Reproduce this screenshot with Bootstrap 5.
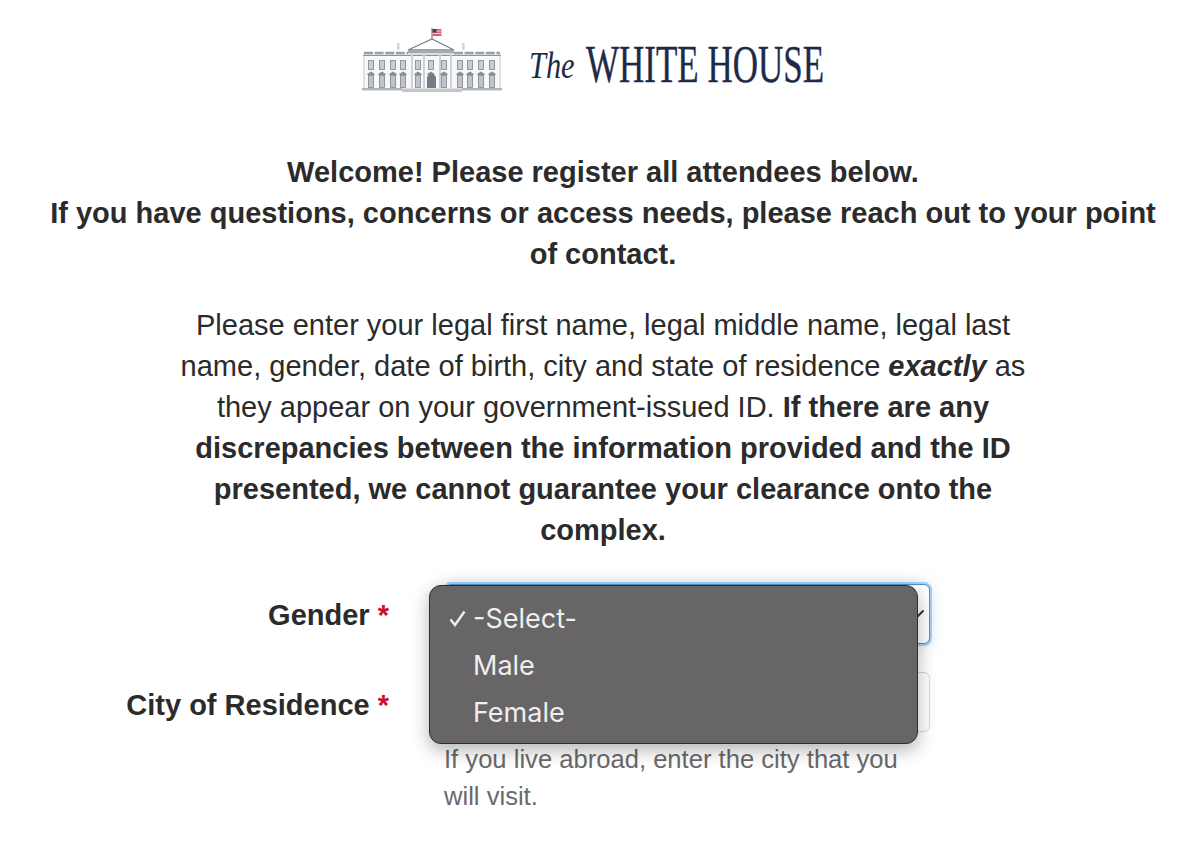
<!DOCTYPE html>
<html lang="en">
<head>
  <meta charset="UTF-8" />
  <title>Register attendees - The White House</title>
  <link href="https://cdn.jsdelivr.net/npm/bootstrap@5.3.0/dist/css/bootstrap.min.css" rel="stylesheet" />
  <style>
    body {
      background: #fff;
      color: #2b2b2b;
      font-family: "Liberation Sans", Arial, sans-serif;
      font-size: 29px;
      line-height: 41px;
      overflow: hidden;
    }
    .page-wrap {
      width: 1124px;
      margin-left: 41px;
    }
    .logo-bar {
      height: 152px;
      padding-top: 28px;
      padding-left: 320px;
      gap: 26px;
    }
    .logo-the {
      font-family: "Liberation Serif", serif;
      font-style: italic;
      font-size: 38px;
      line-height: 38px;
      color: #1e2a47;
      margin-top: 18px;
      width: 44px;
      display: inline-block;
      transform: scaleX(.8);
      transform-origin: left;
    }
    .logo-name {
      font-family: "Liberation Serif", serif;
      font-size: 53px;
      line-height: 53px;
      color: #1e2a47;
      -webkit-text-stroke: .4px #1e2a47;
      margin-top: 10px;
      margin-left: 13px;
      white-space: nowrap;
      display: inline-block;
      width: 236px;
      transform: scaleX(.66);
      transform-origin: left;
    }
    .intro-head {
      font-weight: 700;
      margin-bottom: 30px;
    }
    .intro-text {
      width: 860px;
      margin: 0 auto 33px;
    }
    .form-line {
      display: flex;
      gap: 56px;
    }
    .form-line-first { margin-bottom: 28px; }
    .form-label-cell {
      width: 348px;
      flex: none;
      text-align: right;
      font-weight: 700;
      padding-top: 11px;
    }
    .form-label-low { padding-top: 13px; }
    .req { color: #c8102e; }
    .field-cell {
      width: 485px;
      flex: none;
      position: relative;
    }
    .field-cell .form-select,
    .field-cell .form-control {
      height: 60px;
      border-radius: 6px;
      font-size: 27px;
    }
    .field-cell .form-select {
      border: 1px solid #4a93d6;
      box-shadow: 0 0 0 2px #a5cdf0, 0 0 16px rgba(120, 170, 220, .35);
      background-position: right 2px center;
      background-size: 20px 16px;
    }
    .field-cell .form-control { border-color: #d8d8d8; }
    .pick-menu {
      position: absolute;
      left: -16px;
      top: 1px;
      width: 489px;
      height: 159px;
      padding: 9px 0 0;
      margin: 0;
      background: #676565;
      border: 1px solid #2e2e2e;
      border-radius: 12px;
      box-shadow: 0 6px 18px rgba(0, 0, 0, .3);
      font-family: Inter, "Liberation Sans", sans-serif;
      font-size: 27px;
      font-weight: 500;
      z-index: 10;
    }
    .pick-menu .dropdown-item {
      color: #efefef;
      height: 47px;
      line-height: 47px;
      padding: 0 0 0 43px;
      position: relative;
      background: transparent;
    }
    .pick-check {
      position: absolute;
      left: 19px;
      top: 15px;
    }
    .help-note {
      color: #6a6a6a;
      font-size: 25.6px;
      line-height: 37px;
      margin-top: 9px;
      margin-left: -1px;
    }
  </style>
</head>
<body>
  <div class="page-wrap">
    <!-- Logo -->
    <div class="logo-bar d-flex align-items-start">
      <svg width="142" height="66" viewBox="0 0 142 66">
        <defs>
          <g id="win">
            <rect x=".5" y=".5" width="5" height="9" fill="#c9ccd2" stroke="#8a8e98" stroke-width=".9" />
            <path d="M-1 14 L3 11.5 L7 14 Z" fill="#8a8e98" />
            <rect x="-.5" y="14" width="7" height="1.2" fill="#8a8e98" />
            <rect x=".5" y="15.5" width="5" height="12" fill="#c0c3ca" stroke="#8a8e98" stroke-width=".9" />
          </g>
        </defs>
        <!-- flag -->
        <line x1="71" y1="0" x2="71" y2="12" stroke="#666" stroke-width="1" />
        <rect x="71.5" y="1" width="9" height="7" fill="#d9606a" />
        <rect x="71.5" y="2.6" width="9" height=".9" fill="#f3d5d7" />
        <rect x="71.5" y="5" width="9" height=".9" fill="#f3d5d7" />
        <rect x="71.5" y="1" width="4" height="3.5" fill="#33416e" />
        <!-- roof urns -->
        <rect x="36" y="15" width="2.5" height="7" fill="#d3d5da" />
        <rect x="101" y="15" width="2.5" height="7" fill="#d3d5da" />
        <!-- walls -->
        <rect x="3" y="27" width="136" height="34" fill="#f7f8f9" stroke="#b9bcc3" stroke-width=".8" />
        <!-- balustrade -->
        <line x1="3" y1="25" x2="47" y2="25" stroke="#9a9ea8" stroke-width="2.6" stroke-dasharray="9 1.6" />
        <line x1="93" y1="25" x2="139" y2="25" stroke="#9a9ea8" stroke-width="2.6" stroke-dasharray="9 1.6" />
        <line x1="2" y1="27.5" x2="140" y2="27.5" stroke="#8f939d" stroke-width="1" />
        <!-- portico -->
        <path d="M47 22 L71 11 L93 22 Z" fill="#fff" stroke="#7e828c" stroke-width="1.3" />
        <rect x="47" y="22" width="46" height="3.4" fill="#a4a8b1" />
        <rect x="50" y="25" width="2" height="35" fill="#d0d2d8" />
        <rect x="62" y="25" width="2" height="35" fill="#d0d2d8" />
        <rect x="78" y="25" width="2" height="35" fill="#d0d2d8" />
        <rect x="89" y="25" width="2" height="35" fill="#d0d2d8" />
        <!-- windows -->
        <use href="#win" x="7" y="32" />
        <use href="#win" x="18" y="32" />
        <use href="#win" x="29" y="32" />
        <use href="#win" x="39" y="32" />
        <use href="#win" x="54" y="32" />
        <use href="#win" x="67" y="32" />
        <use href="#win" x="80" y="32" />
        <use href="#win" x="96" y="32" />
        <use href="#win" x="106" y="32" />
        <use href="#win" x="117" y="32" />
        <use href="#win" x="128" y="32" />
        <path d="M66 60 V49 Q70.500 42 75 49 V60 Z" fill="#777b85" />
        <!-- steps -->
        <rect x="1" y="60" width="40" height="2.400" fill="#b0b3bb" />
        <rect x="101" y="60" width="40" height="2.400" fill="#b0b3bb" />
        <rect x="41" y="61" width="60" height="3" fill="#c3c6cc" />
      </svg>
      <div class="d-flex">
        <span class="logo-the">The</span>
        <span class="logo-name">WHITE HOUSE</span>
      </div>
    </div>

    <div class="intro-head text-center">
      Welcome! Please register all attendees below.<br />
      If you have questions, concerns or access needs, please reach out to your point of contact.
    </div>

    <p class="intro-text text-center">
      Please enter your legal first name, legal middle name, legal last name, gender, date of birth, city and state of residence <strong><em>exactly</em></strong> as they appear on your government-issued ID. <strong>If there are any discrepancies between the information provided and the ID presented, we cannot guarantee your clearance onto the complex.</strong>
    </p>

    <form>
      <div class="form-line form-line-first">
        <label class="form-label-cell">Gender <span class="req">*</span></label>
        <div class="field-cell">
          <select class="form-select" aria-label="Gender"><option></option></select>
          <ul class="pick-menu list-unstyled">
            <li class="dropdown-item">
              <svg class="pick-check" width="17" height="17" viewBox="0 0 17 17"><path d="M1.500 9.500 L6 15 L15.500 1.500" fill="none" stroke="#efefef" stroke-width="2.400" /></svg>
              -Select-
            </li>
            <li class="dropdown-item">Male</li>
            <li class="dropdown-item">Female</li>
          </ul>
        </div>
      </div>
      <div class="form-line">
        <label class="form-label-cell form-label-low">City of Residence <span class="req">*</span></label>
        <div class="field-cell">
          <input class="form-control" type="text" aria-label="City of Residence" />
          <div class="help-note">If you live abroad, enter the city that you will visit.</div>
        </div>
      </div>
    </form>
  </div>
</body>
</html>
